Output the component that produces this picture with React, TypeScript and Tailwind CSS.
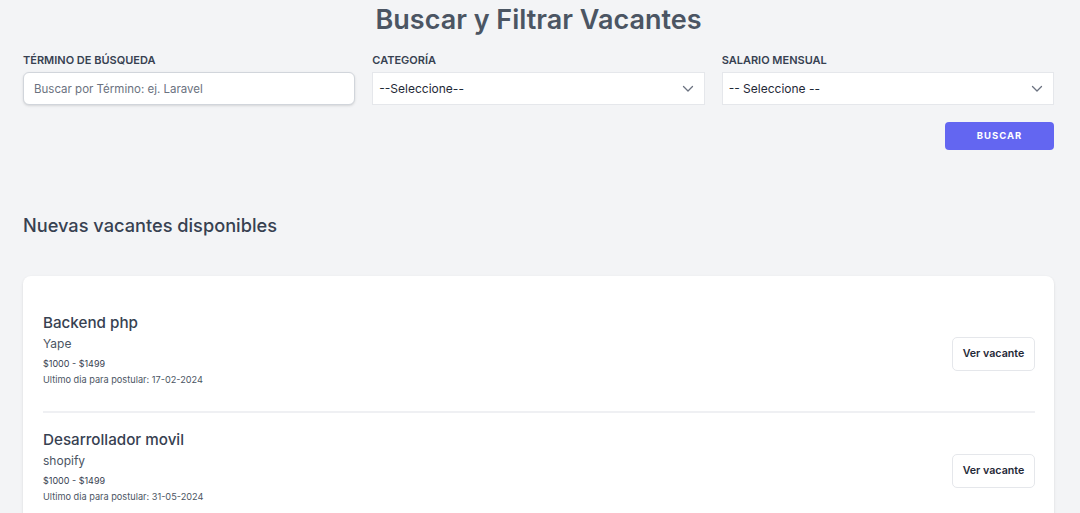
import React from "react";

const vacantes = [
  { titulo: "Backend php", empresa: "Yape", salario: "$1000 - $1499", fecha: "17-02-2024" },
  { titulo: "Desarrollador movil", empresa: "shopify", salario: "$1000 - $1499", fecha: "31-05-2024" },
];

function Chevron() {
  return (
    <svg
      className="pointer-events-none absolute right-[11px] top-1/2 -translate-y-1/2"
      width="12"
      height="8"
      viewBox="0 0 12 8"
      fill="none"
    >
      <path d="M1.5 1.5 L6 6 L10.5 1.5" stroke="#6b7280" strokeWidth="1.3" strokeLinecap="round" strokeLinejoin="round" />
    </svg>
  );
}

export default function App() {
  return (
    <div
      className="h-[513px] overflow-hidden bg-[#f3f4f6] pl-[23px] pr-[26px]"
      style={{ fontFamily: "Inter, 'Noto Sans', sans-serif" }}
    >
      <h2 className="text-center text-[27px] leading-[40px] font-semibold text-[#4b5563]">
        Buscar y Filtrar Vacantes
      </h2>

      <form className="mt-[12px]" onSubmit={(e) => e.preventDefault()}>
        <div className="grid grid-cols-3 gap-x-[17px]">
          <div>
            <label className="block text-[11px] leading-[16px] font-semibold uppercase text-[#374151]">
              Término de búsqueda
            </label>
            <input
              type="text"
              placeholder="Buscar por Término: ej. Laravel"
              className="mt-[4px] block h-[33px] w-full rounded-md border border-[#d1d5db] bg-white px-[10px] text-[11.5px] text-[#374151] shadow-sm outline-none placeholder:text-[#6b7280]"
            />
          </div>
          <div>
            <label className="block text-[11px] leading-[16px] font-semibold uppercase text-[#374151]">
              Categoría
            </label>
            <div className="relative mt-[4px]">
              <select className="block h-[33px] w-full appearance-none border border-[#e5e7eb] bg-white px-[6px] text-[12px] text-[#1f2937] outline-none">
                <option>--Seleccione--</option>
              </select>
              <Chevron />
            </div>
          </div>
          <div>
            <label className="block text-[11px] leading-[16px] font-semibold uppercase text-[#374151]">
              Salario mensual
            </label>
            <div className="relative mt-[4px]">
              <select className="block h-[33px] w-full appearance-none border border-[#e5e7eb] bg-white px-[6px] text-[12px] text-[#1f2937] outline-none">
                <option>-- Seleccione --</option>
              </select>
              <Chevron />
            </div>
          </div>
        </div>

        <div className="mt-[17px] flex justify-end">
          <button
            type="submit"
            className="flex h-[28px] w-[109px] items-center justify-center rounded-[4px] bg-[#6366f1] text-[9.5px] font-bold uppercase tracking-[0.1em] text-white"
          >
            Buscar
          </button>
        </div>
      </form>

      <h3 className="mt-[61px] text-[18.2px] leading-[28px] font-medium text-[#374151]">
        Nuevas vacantes disponibles
      </h3>

      <div className="mt-[37px] rounded-lg bg-white py-5 pl-5 pr-[19px] shadow-sm">
        {vacantes.map((v, i) => (
          <div
            key={v.titulo}
            className={`flex items-center justify-between pt-[16px] pb-[23px] ${
              i < vacantes.length - 1 ? "border-b-2 border-[#eff0f3]" : ""
            }`}
          >
            <div>
              <p className="text-[15.2px] leading-[22px] font-medium text-[#374151]">{v.titulo}</p>
              <p className="text-[12px] leading-[20px] text-[#4b5563]">{v.empresa}</p>
              <p className="mt-[2px] text-[9px] leading-[16px] text-[#374151]">{v.salario}</p>
              <p className="text-[9.2px] leading-[16px] text-[#4b5563]">
                Ultimo dia para postular: {v.fecha}
              </p>
            </div>
            <a
              href="#"
              className="mt-[8px] flex h-[34px] w-[83px] items-center justify-center rounded-[5px] border border-[#e5e7eb] bg-white text-[10.7px] font-semibold text-[#1f2937]"
            >
              Ver vacante
            </a>
          </div>
        ))}
      </div>
    </div>
  );
}
